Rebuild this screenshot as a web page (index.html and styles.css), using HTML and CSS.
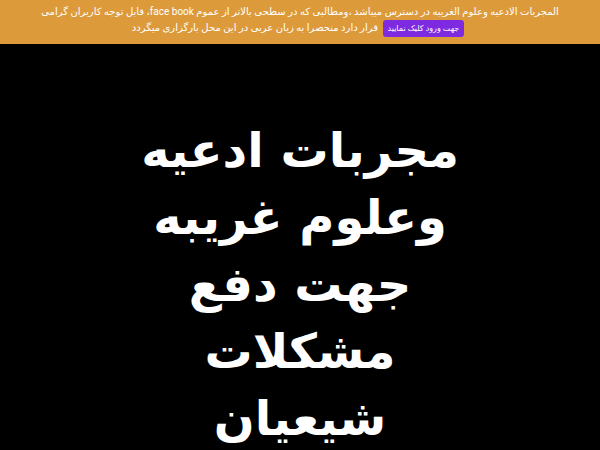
FILE: index.html
```html
<!DOCTYPE html>
<html lang="fa" dir="rtl">
<head>
  <meta charset="UTF-8">
  <meta name="viewport" content="width=device-width, initial-scale=1.0">
  <title>مجربات ادعیه</title>
  <link rel="stylesheet" href="styles.css">
</head>
<body>
  <div class="notice-bar">
    <p>المجربات الادعیه وعلوم الغریبه در دسترس میباشد ،ومطالبی که در سطحی بالاتر از عموم face book، قابل توجه کاربران گرامی<br>
      <a class="notice-btn" href="#">جهت ورود کلیک نمایید</a>
      قرار دارد منحصرا به زبان عربی در این محل بارگزاری میگردد</p>
  </div>
  <div class="hero">
    <h1>مجربات ادعیه وعلوم غریبه جهت دفع مشکلات شیعیان</h1>
  </div>
</body>
</html>
```

FILE: styles.css
```css
body {
  margin: 0;
  background-color: #000;
  font-family: 'DejaVu Sans', sans-serif;
}
.notice-bar {
  background-color: #dd9a3b;
  color: #fff;
  text-align: center;
  padding: 4px 30px 0;
  box-sizing: border-box;
  height: 44px;
}
.notice-bar p {
  margin: 0;
  font-family: Roboto, 'DejaVu Sans', sans-serif;
  font-size: 10px;
  line-height: 16px;
}
.notice-btn {
  display: inline-block;
  vertical-align: middle;
  background-color: #7d2ae0;
  color: #fff;
  text-decoration: none;
  font-size: 8px;
  line-height: 17px;
  padding: 0 5px;
  border-radius: 3px;
  margin: 0 4px 0 2px;
}
.hero {
  display: flex;
  justify-content: center;
  padding-top: 73px;
}
.hero h1 {
  width: 330px;
  margin: 0;
  color: #fff;
  text-align: center;
  font-size: 48px;
  line-height: 67px;
  font-weight: bold;
}
```
